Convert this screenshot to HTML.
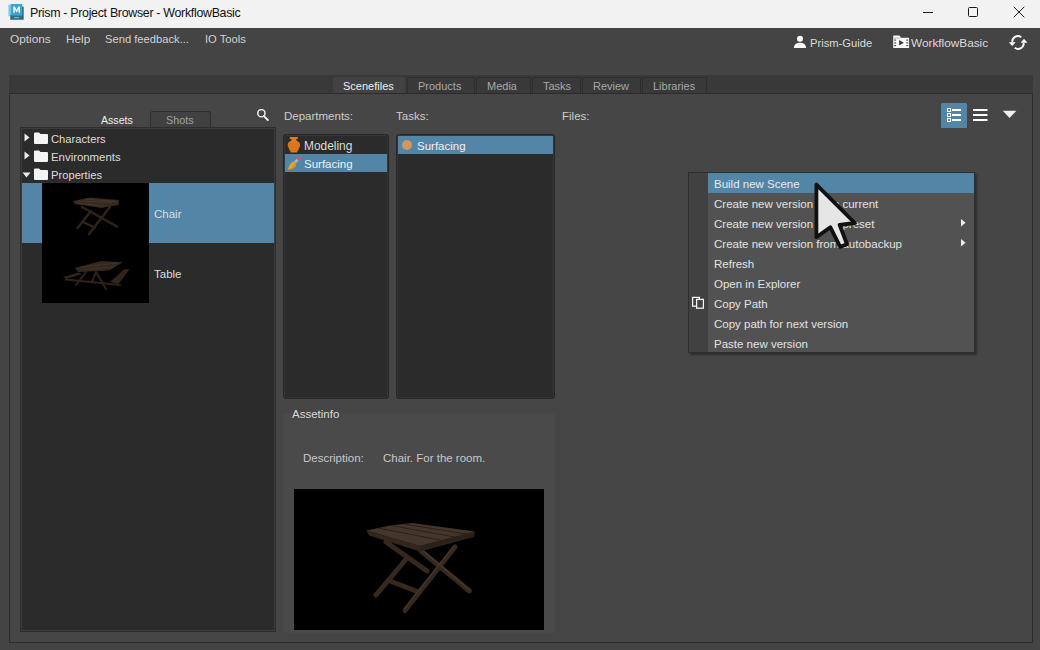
<!DOCTYPE html>
<html><head><meta charset="utf-8">
<style>
*{box-sizing:border-box;margin:0;padding:0}
html,body{width:1040px;height:650px;overflow:hidden;background:#444444;font-family:"Liberation Sans",sans-serif;color:#dcdcdc;font-size:11.5px}
.a{position:absolute;white-space:nowrap}
#title{left:0;top:0;width:1040px;height:28px;background:#f3f2f3}
.t{line-height:14px}
</style></head>
<body>
<!-- title bar -->
<div id="title" class="a">
  <svg class="a" style="left:8px;top:4px" width="16" height="16" viewBox="8 4 16 16">
    <rect x="8.4" y="4.7" width="3" height="11.5" fill="#7fcbe5"/>
    <rect x="22" y="6.7" width="1.7" height="13" fill="#2a6482"/>
    <rect x="10.8" y="4" width="11.5" height="11.2" fill="#3aa6d0"/>
    <rect x="10.2" y="15.2" width="12.2" height="4.6" fill="#2c6d8b"/>
    <path d="M13.3 12.8V6.4H14.9L16.6 10L18.3 6.4H19.9V12.8H18.5V9L16.9 12.2H16.3L14.7 9V12.8Z" fill="#f4fbfe"/>
    <rect x="14" y="17" width="5" height="1.2" fill="#7fb0c5"/>
  </svg>
  <div class="a t" style="left:30px;top:6px;color:#111;font-size:12.4px;letter-spacing:-0.3px">Prism - Project Browser - WorkflowBasic</div>
  <!-- window controls -->
  <div class="a" style="left:923px;top:12px;width:10px;height:1px;background:#1a1a1a"></div>
  <div class="a" style="left:968px;top:7px;width:10px;height:10px;border:1px solid #1a1a1a;border-radius:1.5px"></div>
  <svg class="a" style="left:1013px;top:6px" width="12" height="12" viewBox="0 0 12 12"><path d="M0.7 0.8L11.3 11.3M11.3 0.8L0.7 11.3" stroke="#1a1a1a" stroke-width="1"/></svg>
</div>

<!-- menubar -->
<div class="a t" style="left:10px;top:32px;font-size:11.8px;color:#d2d2d2">Options</div>
<div class="a t" style="left:66px;top:32px;font-size:11.8px;color:#d2d2d2">Help</div>
<div class="a t" style="left:105px;top:32px;font-size:11.2px;color:#d2d2d2">Send feedback...</div>
<div class="a t" style="left:205px;top:32px;font-size:11.2px;color:#d2d2d2">IO Tools</div>

<!-- top right -->
<svg class="a" style="left:793px;top:35px" width="14" height="14" viewBox="0 0 14 14"><circle cx="7" cy="3.7" r="3.05" fill="#fafafa"/><path d="M0.9 13.1C0.9 9.6 3.6 7.8 7 7.8S13.1 9.6 13.1 13.1Z" fill="#fafafa"/></svg>
<div class="a t" style="left:810px;top:36px;font-size:11.2px;color:#dcdcdc">Prism-Guide</div>
<svg class="a" style="left:893px;top:35px" width="17" height="14" viewBox="0 0 17 14">
<path d="M0.2 1.3Q0.2 0.6 0.9 0.6H6.2Q6.8 0.6 7.1 1.2L7.8 2.8H15.4Q16.1 2.8 16.1 3.5V12.4Q16.1 13.1 15.4 13.1H0.9Q0.2 13.1 0.2 12.4Z" fill="#fafafa"/>
<path d="M0.3 3.1H7.3" stroke="#9a9a9a" stroke-width="0.7"/>
<rect x="1.1" y="4.5" width="2" height="1.2" fill="#555"/><rect x="1.1" y="7.3" width="2" height="1.2" fill="#555"/><rect x="1.1" y="10" width="2" height="1.2" fill="#555"/>
<rect x="13.3" y="4.5" width="2" height="1.2" fill="#555"/><rect x="13.3" y="7.3" width="2" height="1.2" fill="#555"/><rect x="13.3" y="10" width="2" height="1.2" fill="#555"/>
<path d="M6.1 5L10.9 7.8L6.1 10.6Z" fill="#3a3a3a"/>
</svg>
<div class="a t" style="left:911px;top:36px;font-size:11.8px;color:#dcdcdc">WorkflowBasic</div>
<svg class="a" style="left:1004px;top:30px" width="28" height="24" viewBox="1004 30 28 24">
<path d="M1021.3 37.2A5.6 5.6 0 0 0 1012.4 42.6" stroke="#fafafa" stroke-width="1.9" fill="none"/>
<path d="M1008.8 42.2L1015.6 42.2L1012.2 45.9Z" fill="#fafafa"/>
<path d="M1014.7 47.8A5.6 5.6 0 0 0 1023.6 42.4" stroke="#fafafa" stroke-width="1.9" fill="none"/>
<path d="M1020.6 42.8L1027.4 42.8L1024 38.8Z" fill="#fafafa"/>
</svg>

<!-- tab bar -->
<div class="a" style="left:9px;top:75px;width:1024px;height:19px;background:#393939"></div>
<div id="tabs">
  <div class="a" style="left:333px;top:77px;width:72px;height:17px;background:#424242;border-radius:2px 2px 0 0"></div>
  <div class="a t" style="left:343px;top:79px;font-size:11px;color:#eeeeee">Scenefiles</div>
  <div class="a" style="left:407px;top:77px;width:68px;height:17px;border:1px solid #2e2e2e;border-bottom:none;border-radius:2px 2px 0 0"></div>
  <div class="a t" style="left:418px;top:79px;font-size:11px;color:#a8a8a8">Products</div>
  <div class="a" style="left:476px;top:77px;width:55px;height:17px;border:1px solid #2e2e2e;border-bottom:none;border-radius:2px 2px 0 0"></div>
  <div class="a t" style="left:487px;top:79px;font-size:11px;color:#a8a8a8">Media</div>
  <div class="a" style="left:532px;top:77px;width:49px;height:17px;border:1px solid #2e2e2e;border-bottom:none;border-radius:2px 2px 0 0"></div>
  <div class="a t" style="left:543px;top:79px;font-size:11px;color:#a8a8a8">Tasks</div>
  <div class="a" style="left:582px;top:77px;width:59px;height:17px;border:1px solid #2e2e2e;border-bottom:none;border-radius:2px 2px 0 0"></div>
  <div class="a t" style="left:593px;top:79px;font-size:11px;color:#a8a8a8">Review</div>
  <div class="a" style="left:642px;top:77px;width:65px;height:17px;border:1px solid #2e2e2e;border-bottom:none;border-radius:2px 2px 0 0"></div>
  <div class="a t" style="left:653px;top:79px;font-size:11px;color:#a8a8a8">Libraries</div>
</div>

<!-- main panel -->
<div class="a" style="left:9px;top:93px;width:1024px;height:550px;border:1px solid #2c2c2c;border-top-color:#2c2c2c;background:#464646"></div>

<!-- assets/shots -->
<div class="a t" style="left:101px;top:113px;font-size:10.6px;color:#eeeeee">Assets</div>
<div class="a" style="left:150px;top:111px;width:61px;height:17px;border:1px solid #2e2e2e;border-bottom:none;border-radius:3px 3px 0 0;background:#414141"></div>
<div class="a t" style="left:166px;top:113px;font-size:10.8px;color:#a0a0a0">Shots</div>
<svg class="a" style="left:256px;top:109px" width="13" height="13" viewBox="0 0 13 13"><circle cx="5.4" cy="4.2" r="3.6" stroke="#f0f0f0" stroke-width="1.5" fill="none"/><path d="M8 7.2L11.8 11" stroke="#f0f0f0" stroke-width="1.9" stroke-linecap="round"/></svg>

<!-- asset tree -->
<div class="a" style="left:20px;top:127px;width:256px;height:505px;border:1px solid #2c2c2c;background:#2b2b2b;box-shadow:inset 0 0 0 1px #3c3c3c"></div>
<svg class="a" style="left:24px;top:133px" width="6" height="9" viewBox="0 0 6 9"><path d="M0.5 0.5L5.5 4.5L0.5 8.5Z" fill="#eaeaea"/></svg>
<svg class="a" style="left:34px;top:132px" width="14" height="12" viewBox="0 0 14 12"><path d="M0 1.5Q0 0.5 1 0.5H5L6.5 2H13Q14 2 14 3V11Q14 12 13 12H1Q0 12 0 11Z" fill="#f4f4f4"/></svg>
<div class="a t" style="left:51px;top:132px;font-size:11.2px;color:#dddddd">Characters</div>
<svg class="a" style="left:24px;top:151px" width="6" height="9" viewBox="0 0 6 9"><path d="M0.5 0.5L5.5 4.5L0.5 8.5Z" fill="#eaeaea"/></svg>
<svg class="a" style="left:34px;top:150px" width="14" height="12" viewBox="0 0 14 12"><path d="M0 1.5Q0 0.5 1 0.5H5L6.5 2H13Q14 2 14 3V11Q14 12 13 12H1Q0 12 0 11Z" fill="#f4f4f4"/></svg>
<div class="a t" style="left:51px;top:150px;font-size:11.4px;color:#dddddd">Environments</div>
<svg class="a" style="left:22px;top:172px" width="9" height="6" viewBox="0 0 9 6"><path d="M0.5 0.5H8.5L4.5 5.5Z" fill="#eaeaea"/></svg>
<svg class="a" style="left:34px;top:168px" width="14" height="12" viewBox="0 0 14 12"><path d="M0 1.5Q0 0.5 1 0.5H5L6.5 2H13Q14 2 14 3V11Q14 12 13 12H1Q0 12 0 11Z" fill="#f4f4f4"/></svg>
<div class="a t" style="left:51px;top:168px;font-size:11.2px;color:#dddddd">Properties</div>

<div class="a" style="left:22px;top:183px;width:252px;height:60px;background:#5285a6"></div>
<div class="a" style="left:42px;top:183px;width:107px;height:120px;background:#000"></div>
<svg class="a" style="left:42px;top:183px" width="107" height="120" viewBox="42 183 107 120">
  <g stroke="#2f231a" stroke-width="2.4" stroke-linecap="round">
    <path d="M82 207L117 226.5"/><path d="M110 207L89 234"/><path d="M91 211L77.5 228"/><path d="M83 222L94.5 227.5"/>
  </g>
  <path d="M73 201L90 197.5L119 200L118.5 205L101 208L75 204Z" fill="#36291f"/>
  <path d="M78 201L112 202.5M85 199L116 201.5M76 203L104 206" stroke="#4d3d31" stroke-width="0.7"/>
  <g stroke="#2e2219" stroke-width="2" stroke-linecap="round">
    <path d="M86 272L76 285"/><path d="M96 272L106 289"/><path d="M95.5 273L92 281.5"/><path d="M66 279.5L120 285"/>
  </g>
  <path d="M75 268L101 261L123 262.3L109 270.5L78 272Z" fill="#34271d"/>
  <path d="M80 267L118 263M84 269.5L114 267" stroke="#473629" stroke-width="0.8"/>
  <path d="M63 277L79 272.5L82 274L66 279Z" fill="#30241b"/>
  <path d="M110 282L124.5 269L129.5 269.5L118.5 284Z" fill="#30241b"/>
</svg>
<div class="a t" style="left:154px;top:207px;font-size:11.5px;color:#d8dde2">Chair</div>
<div class="a t" style="left:154px;top:267px;font-size:11.5px;color:#dddddd">Table</div>

<!-- departments / tasks / files -->
<div class="a t" style="left:284px;top:109px;font-size:11.5px;color:#cccccc">Departments:</div>
<div class="a t" style="left:396px;top:109px;font-size:11.5px;color:#cccccc">Tasks:</div>
<div class="a t" style="left:562px;top:109px;font-size:11.5px;color:#cccccc">Files:</div>

<div class="a" style="left:283px;top:134px;width:106px;height:265px;border:1px solid #262626;border-radius:3px;background:#2b2b2b;box-shadow:inset 0 0 0 1px #363636"></div>
<div class="a" style="left:285px;top:154px;width:102px;height:18px;background:#5285a6"></div>
<svg class="a" style="left:287px;top:136px" width="14" height="18" viewBox="0 0 14 18">
  <path d="M2.8 1H10.8V3H9.3V4.5L12.2 6.3Q13.1 7.8 13.1 9.5L10 16.5H3.8L0.7 9.5Q0.7 7.8 1.6 6.3L4.3 4.5V3H2.8Z" fill="#e07a20"/>
  <path d="M1 8H13M0.8 11H13M2 14H12" stroke="#c9681a" stroke-width="0.6"/>
</svg>
<div class="a t" style="left:304px;top:139px;font-size:11.9px;color:#dddddd">Modeling</div>
<svg class="a" style="left:286px;top:155px" width="16" height="16" viewBox="0 0 16 16">
  <path d="M8.8 7.5L12 4.3" stroke="#a9b8c4" stroke-width="2.6"/>
  <path d="M11.6 4.7L13.9 2.4" stroke="#e0505e" stroke-width="3"/>
  <path d="M9.3 6.8Q11.2 9.2 9 12Q6.5 14.6 1.5 14.5Q2.5 11.5 5 8.3Q7.2 5.8 9.3 6.8Z" fill="#e0a52a"/>
  <path d="M9.3 6.8Q11.2 9.2 9 12Q7.5 13.5 5 14.1Q8 11 9.3 6.8Z" fill="#d98a2a"/>
</svg>
<div class="a t" style="left:304px;top:157px;font-size:11.5px;color:#f0f0f0">Surfacing</div>

<div class="a" style="left:396px;top:134px;width:159px;height:265px;border:1px solid #262626;border-radius:3px;background:#2b2b2b;box-shadow:inset 0 0 0 1px #363636"></div>
<div class="a" style="left:398px;top:136px;width:155px;height:18px;background:#5285a6"></div>
<div class="a" style="left:402px;top:140px;width:10px;height:10px;border-radius:50%;background:#d49660"></div>
<div class="a t" style="left:417px;top:139px;font-size:11.5px;color:#f0f0f0">Surfacing</div>

<!-- assetinfo -->
<div class="a" style="left:283px;top:413px;width:272px;height:220px;background:#4a4a4a;border-radius:2px"></div>
<div class="a" style="left:291px;top:408px;width:51px;height:12px;background:#464646"></div>
<div class="a t" style="left:292px;top:407px;font-size:11.5px;color:#d8d8d8">Assetinfo</div>
<div class="a t" style="left:303px;top:451px;font-size:11.5px;color:#c8c8c8">Description:</div>
<div class="a t" style="left:383px;top:451px;font-size:11.5px;color:#c8c8c8">Chair. For the room.</div>
<div class="a" style="left:294px;top:489px;width:250px;height:141px;background:#000"></div>
<svg class="a" style="left:294px;top:489px" width="250" height="141" viewBox="294 489 250 141">
  <g stroke="#35281e" stroke-width="5" stroke-linecap="round">
    <path d="M386 542L427 571"/><path d="M421 551L469.5 591"/><path d="M407 558L376 595"/><path d="M390 581L416 591"/><path d="M455 547L405 610.5"/>
  </g>
  <g stroke="#4a382b" stroke-width="1.2" stroke-linecap="round">
    <path d="M422 550L469 589.5"/><path d="M454 546L404 609"/>
  </g>
  <path d="M366.5 530.5L369 535.5L420 551.5L420 546Z" fill="#33261d"/>
  <path d="M420 546L475 531.5L474 537L420 551.5Z" fill="#2c2119"/>
  <path d="M366.5 530.5L390 525.5L412 523L475 531.5L420 546Z" fill="#45362b"/>
  <g stroke="#2a1f18" stroke-width="1" fill="none">
    <path d="M378 528L442 540.5"/><path d="M391 525.5L455 537"/><path d="M404 524L466 534"/>
  </g>
</svg>

<!-- view buttons -->
<div class="a" style="left:941px;top:103px;width:26px;height:25px;background:#5285a6;border-radius:1px"></div>
<svg class="a" style="left:946px;top:107px" width="16" height="16" viewBox="0 0 16 16">
  <rect x="1.5" y="1.5" width="3" height="3" stroke="#fff" stroke-width="1" fill="none"/>
  <rect x="1.5" y="6.5" width="3" height="3" stroke="#fff" stroke-width="1" fill="none"/>
  <rect x="1.5" y="11.5" width="3" height="3" stroke="#fff" stroke-width="1" fill="none"/>
  <rect x="6" y="2" width="9" height="2" fill="#fff"/><rect x="6" y="7" width="9" height="2" fill="#fff"/><rect x="6" y="12" width="9" height="2" fill="#fff"/>
</svg>
<svg class="a" style="left:972px;top:107px" width="16" height="16" viewBox="0 0 16 16">
  <rect x="1" y="2" width="14.5" height="2" fill="#fff"/><rect x="1" y="7" width="14.5" height="2" fill="#fff"/><rect x="1" y="12" width="14.5" height="2" fill="#fff"/>
</svg>
<svg class="a" style="left:1002px;top:110px" width="15" height="9" viewBox="0 0 15 9"><path d="M0.8 0.8H14.4L7.6 8Z" fill="#eeeeee"/></svg>

<!-- context menu -->
<div class="a" style="left:690px;top:174px;width:287px;height:181px;background:rgba(0,0,0,0.35);filter:blur(1px)"></div>
<div class="a" style="left:688px;top:172px;width:287px;height:181px;border:1px solid #2e2e2e;background:#525252"></div>
<div class="a" style="left:689px;top:173px;width:19px;height:179px;background:#414141"></div>
<div class="a" style="left:708px;top:173px;width:266px;height:20px;background:#5285a6"></div>
<div class="a t" style="left:714px;top:177px;font-size:11.5px;color:#eaeaea">Build new Scene</div>
<div class="a t" style="left:714px;top:197px;font-size:11.5px;color:#e2e2e2">Create new version from current</div>
<div class="a t" style="left:714px;top:217px;font-size:11.5px;color:#e2e2e2">Create new version from preset</div>
<div class="a t" style="left:714px;top:237px;font-size:11.5px;color:#e2e2e2">Create new version from autobackup</div>
<div class="a t" style="left:714px;top:257px;font-size:11.5px;color:#e2e2e2">Refresh</div>
<div class="a t" style="left:714px;top:277px;font-size:11.5px;color:#e2e2e2">Open in Explorer</div>
<div class="a t" style="left:714px;top:297px;font-size:11.5px;color:#e2e2e2">Copy Path</div>
<div class="a t" style="left:714px;top:317px;font-size:11.5px;color:#e2e2e2">Copy path for next version</div>
<div class="a t" style="left:714px;top:337px;font-size:11.5px;color:#e2e2e2">Paste new version</div>
<svg class="a" style="left:961px;top:219px" width="5" height="8" viewBox="0 0 5 8"><path d="M0 0L4.5 3.7L0 7.4Z" fill="#eeeeee"/></svg>
<svg class="a" style="left:961px;top:239px" width="5" height="8" viewBox="0 0 5 8"><path d="M0 0L4.5 3.7L0 7.4Z" fill="#eeeeee"/></svg>
<svg class="a" style="left:686px;top:290px" width="30" height="26" viewBox="686 290 30 26"><rect x="692.6" y="297.4" width="6.8" height="8.8" stroke="#f5f5f5" stroke-width="1.25" fill="none"/><rect x="696.6" y="299.4" width="6.8" height="8.8" stroke="#f5f5f5" stroke-width="1.25" fill="#414141"/></svg>

<!-- cursor -->
<svg class="a" style="left:0;top:0" width="1040" height="650" viewBox="0 0 1040 650">
  <path d="M816.4 184.6L816.4 237.2L830.3 227.2L840.2 246.8L847 244.2L839.6 224.8L854.8 223Z" fill="#e6e6e6" stroke="#111" stroke-width="3.8" stroke-linejoin="round"/>
</svg>
</body></html>
